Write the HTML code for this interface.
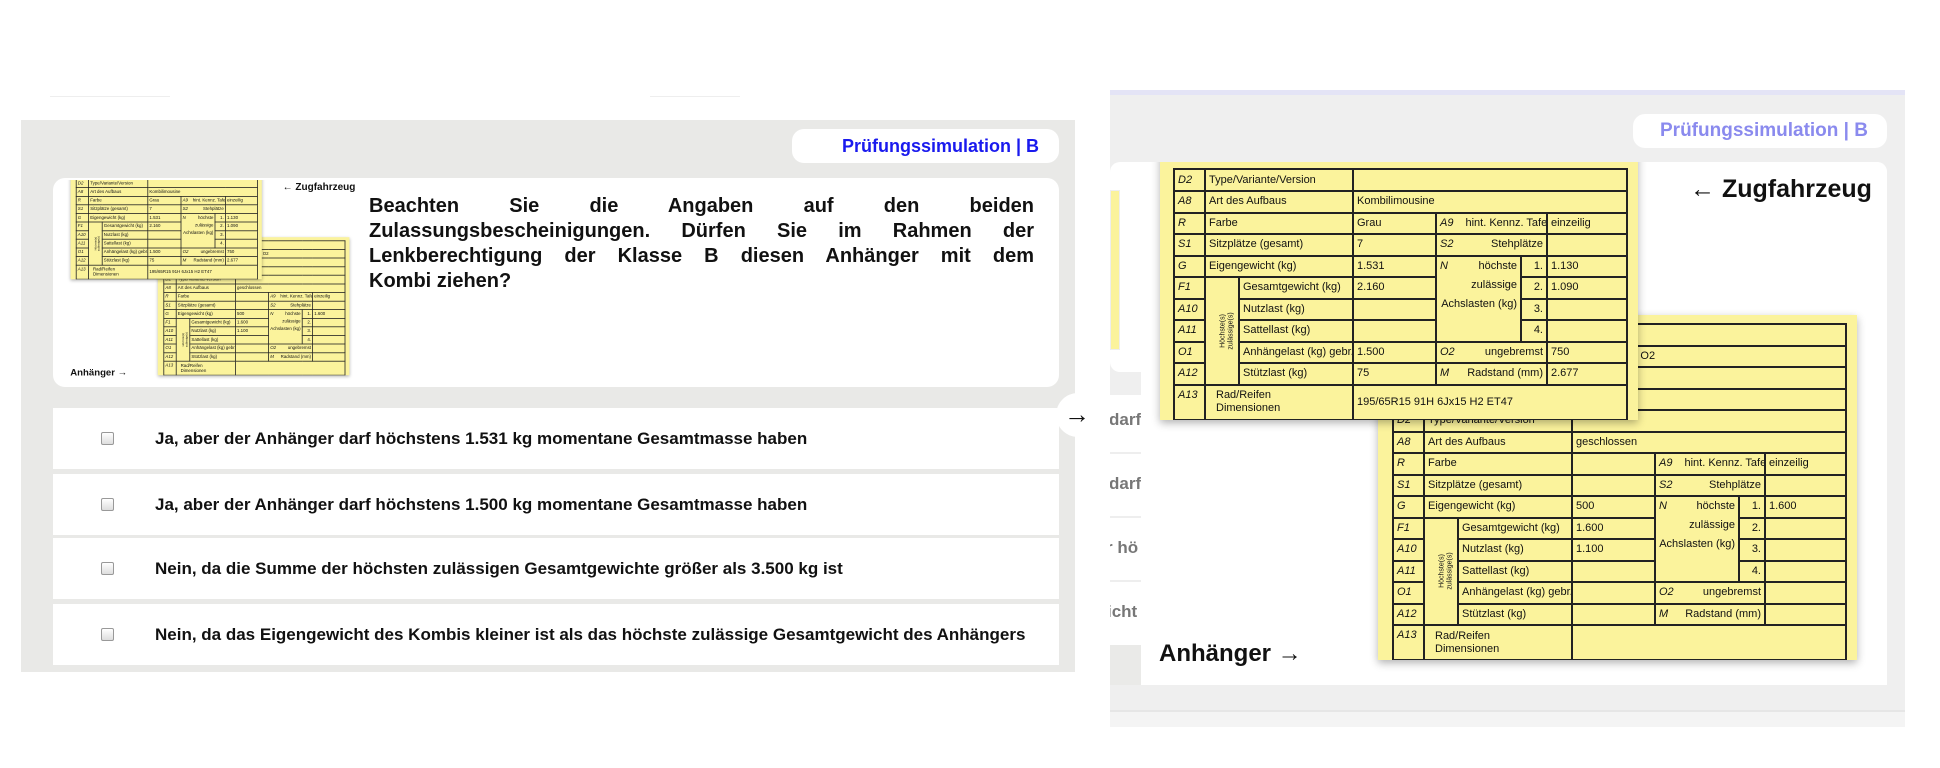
<!DOCTYPE html>
<html><head><meta charset="utf-8"><style>
*{margin:0;padding:0;box-sizing:border-box}
body{width:1940px;height:768px;background:#fff;position:relative;overflow:hidden;font-family:"Liberation Sans",sans-serif}
.abs{position:absolute}
.lp{left:21px;top:120px;width:1054px;height:552px;background:#e9e9e7}
.pill{background:#fff;border-radius:12px}
.opt{position:absolute;left:53px;width:1006px;height:61px;background:#fff;display:flex;align-items:center;font-weight:bold;font-size:17px;color:#111;white-space:nowrap}
.opt .cb{width:13px;height:13px;border:1px solid #999;background:linear-gradient(#fff,#ddd);margin-left:48px;margin-right:41px;border-radius:2px}
.card{position:absolute;background:#fbf39c;box-shadow:0 3px 8px rgba(0,0,0,.3);overflow:hidden}
table{border-collapse:collapse;font-family:"Liberation Sans",sans-serif;font-size:11px;line-height:13px;color:#111;table-layout:fixed;position:absolute}
tr{height:21.5px}
td{border:2px solid #222;padding:0 3px;white-space:nowrap;overflow:hidden}
td i{font-style:italic;margin-right:12px}
.vt{font-size:7px;text-align:center;line-height:8px}
.vt span{display:inline-block;transform:rotate(-90deg);white-space:nowrap}
.r{text-align:right}
.nc{line-height:19px;vertical-align:top;text-align:right}
.ft{font-weight:bold;color:#111;position:absolute;white-space:nowrap}
.frag{position:absolute;left:1110px;width:31px;overflow:hidden;font-weight:bold;font-size:17px;color:#777;line-height:20px;white-space:nowrap}
</style></head><body>
<div class="abs" style="left:50px;top:96px;width:120px;height:1px;background:#eee"></div>
<div class="abs" style="left:650px;top:96px;width:90px;height:1px;background:#eee"></div>
<div class="abs lp"></div>
<div class="abs pill" style="left:792px;top:129px;width:267px;height:34px"></div>
<div class="abs" style="left:792px;top:129px;width:247px;height:34px;line-height:34px;text-align:right;color:#1a1aee;font-weight:bold;font-size:18px">Prüfungssimulation | B</div>
<div class="abs pill" style="left:53px;top:178px;width:1006px;height:209px"></div>
<div class="abs" style="left:369px;top:194px;width:665px;font-weight:bold;font-size:20px;line-height:25px;text-align:justify;text-align-last:justify;color:#111">Beachten Sie die Angaben auf den beiden Zulassungsbescheinigungen. Dürfen Sie im Rahmen der Lenkberechtigung der Klasse B diesen Anhänger mit dem</div>
<div class="abs" style="left:369px;top:269px;font-weight:bold;font-size:20px;line-height:25px;color:#111">Kombi ziehen?</div>
<div class="abs" style="left:63px;top:180px;width:300px;height:202px;overflow:hidden">
 <div id="small" style="position:absolute;left:0;top:-4px;width:746px;height:518px;transform:scale(0.4);transform-origin:0 0"></div>
</div>
<div class="opt" style="top:408px"><div class="cb"></div>Ja, aber der Anhänger darf höchstens 1.531 kg momentane Gesamtmasse haben</div>
<div class="opt" style="top:474px"><div class="cb"></div>Ja, aber der Anhänger darf höchstens 1.500 kg momentane Gesamtmasse haben</div>
<div class="opt" style="top:538px"><div class="cb"></div>Nein, da die Summe der höchsten zulässigen Gesamtgewichte größer als 3.500 kg ist</div>
<div class="opt" style="top:604px"><div class="cb"></div>Nein, da das Eigengewicht des Kombis kleiner ist als das höchste zulässige Gesamtgewicht des Anhängers</div>
<div class="abs" style="left:1056px;top:393px;width:44px;height:44px;border-radius:50%;background:#fff"></div>
<div class="abs" style="left:1064px;top:400px;font-size:26px;line-height:28px;color:#111">→</div>

<!-- right panel -->
<div class="abs" style="left:1110px;top:90px;width:795px;height:637px;background:#efefef"></div>
<div class="abs" style="left:1110px;top:90px;width:795px;height:5px;background:#e4e4f6"></div>
<div class="abs" style="left:1110px;top:710px;width:795px;height:2px;background:#e6e6e6"></div>
<div class="abs" style="left:1110px;top:712px;width:795px;height:15px;background:#f4f4f4"></div>
<div class="abs pill" style="left:1633px;top:114px;width:254px;height:34px"></div>
<div class="abs" style="left:1633px;top:114px;width:235px;height:34px;line-height:34px;text-align:right;color:#8a8aee;font-weight:bold;font-size:19px">Prüfungssimulation | B</div>
<div class="abs" style="left:1110px;top:162px;width:777px;height:210px;background:#fff;border-radius:10px"></div>
<div class="abs" style="left:1110px;top:190px;width:10px;height:160px;background:#fbf39c;border:1px solid #eee"></div>
<div class="abs" style="left:1110px;top:395px;width:777px;height:290px;background:#fff"></div>
<div class="abs" style="left:1110px;top:452px;width:31px;height:2px;background:#eee"></div>
<div class="abs" style="left:1110px;top:516px;width:31px;height:2px;background:#eee"></div>
<div class="abs" style="left:1110px;top:580px;width:31px;height:2px;background:#eee"></div>
<div class="abs" style="left:1110px;top:645px;width:31px;height:40px;background:#eaeae8"></div>
<div class="frag" style="top:410px"><span style="margin-left:-1px">darf</span></div>
<div class="frag" style="top:474px"><span style="margin-left:-1px">darf</span></div>
<div class="frag" style="top:538px"><span style="margin-left:-4px">r hö</span></div>
<div class="frag" style="top:602px"><span style="margin-left:-3px">icht</span></div>
<div class="abs" style="left:1141px;top:162px;width:746px;height:518px;background:#fff;border-radius:0 10px 0 0"></div>
<div class="abs" id="big" style="left:1141px;top:162px;width:746px;height:518px;overflow:hidden"></div>

<template id="tpl">
<div class="ft" style="left:549px;top:13px;font-size:25px">← Zugfahrzeug</div>
<div class="ft" style="left:18px;top:478px;font-size:24px">Anhänger →</div>
<div class="card" style="left:237px;top:153px;width:479px;height:345px">
<table style="left:14px;top:8px;width:453px">
<colgroup><col style="width:31px"><col style="width:34px"><col style="width:114px"><col style="width:83px"><col style="width:84px"><col style="width:26px"><col style="width:81px"></colgroup>
<tr><td colspan="7"></td></tr>
<tr><td colspan="7" style="padding-left:225px">gen O2</td></tr>
<tr><td colspan="7"></td></tr>
<tr><td colspan="7"></td></tr>
<tr><td><i>D2</i></td><td colspan="2">Type/Variante/Version</td><td colspan="4"></td></tr>
<tr><td><i>A8</i></td><td colspan="2">Art des Aufbaus</td><td colspan="4">geschlossen</td></tr>
<tr><td><i>R</i></td><td colspan="2">Farbe</td><td></td><td colspan="2"><i>A9</i>hint. Kennz. Tafel</td><td>einzeilig</td></tr>
<tr><td><i>S1</i></td><td colspan="2">Sitzplätze (gesamt)</td><td></td><td colspan="2"><i>S2</i><span style="float:right">Stehplätze</span></td><td></td></tr>
<tr><td><i>G</i></td><td colspan="2">Eigengewicht (kg)</td><td>500</td><td rowspan="4" class="nc"><i style="float:left">N</i>höchste<br>zulässige<br>Achslasten (kg)</td><td class="r">1.</td><td>1.600</td></tr>
<tr><td><i>F1</i></td><td rowspan="5" class="vt"><span>Höchste(s)<br>zulässige(s)</span></td><td>Gesamtgewicht (kg)</td><td>1.600</td><td class="r">2.</td><td></td></tr>
<tr><td><i>A10</i></td><td>Nutzlast (kg)</td><td>1.100</td><td class="r">3.</td><td></td></tr>
<tr><td><i>A11</i></td><td>Sattellast (kg)</td><td></td><td class="r">4.</td><td></td></tr>
<tr><td><i>O1</i></td><td>Anhängelast (kg) gebr.</td><td></td><td colspan="2"><i>O2</i><span style="float:right">ungebremst</span></td><td></td></tr>
<tr><td><i>A12</i></td><td>Stützlast (kg)</td><td></td><td colspan="2"><i>M</i><span style="float:right">Radstand (mm)</span></td><td></td></tr>
<tr style="height:35px"><td style="vertical-align:top;padding-top:3px"><i>A13</i></td><td colspan="2" style="padding-left:10px">Rad/Reifen<br>Dimensionen</td><td colspan="4"></td></tr>
</table></div>
<div class="card" style="left:19px;top:-10px;width:478px;height:268px">
<table style="left:13px;top:16px;width:453px">
<colgroup><col style="width:31px"><col style="width:34px"><col style="width:114px"><col style="width:83px"><col style="width:85px"><col style="width:26px"><col style="width:80px"></colgroup>
<tr style="height:22px"><td><i>D2</i></td><td colspan="2">Type/Variante/Version</td><td colspan="4"></td></tr>
<tr><td><i>A8</i></td><td colspan="2">Art des Aufbaus</td><td colspan="4">Kombilimousine</td></tr>
<tr><td><i>R</i></td><td colspan="2">Farbe</td><td>Grau</td><td colspan="2"><i>A9</i>hint. Kennz. Tafel</td><td>einzeilig</td></tr>
<tr><td><i>S1</i></td><td colspan="2">Sitzplätze (gesamt)</td><td>7</td><td colspan="2"><i>S2</i><span style="float:right">Stehplätze</span></td><td></td></tr>
<tr><td><i>G</i></td><td colspan="2">Eigengewicht (kg)</td><td>1.531</td><td rowspan="4" class="nc"><i style="float:left">N</i>höchste<br>zulässige<br>Achslasten (kg)</td><td class="r">1.</td><td>1.130</td></tr>
<tr><td><i>F1</i></td><td rowspan="5" class="vt"><span>Höchste(s)<br>zulässige(s)</span></td><td>Gesamtgewicht (kg)</td><td>2.160</td><td class="r">2.</td><td>1.090</td></tr>
<tr><td><i>A10</i></td><td>Nutzlast (kg)</td><td></td><td class="r">3.</td><td></td></tr>
<tr><td><i>A11</i></td><td>Sattellast (kg)</td><td></td><td class="r">4.</td><td></td></tr>
<tr><td><i>O1</i></td><td>Anhängelast (kg) gebr.</td><td>1.500</td><td colspan="2"><i>O2</i><span style="float:right">ungebremst</span></td><td>750</td></tr>
<tr><td><i>A12</i></td><td>Stützlast (kg)</td><td>75</td><td colspan="2"><i>M</i><span style="float:right">Radstand (mm)</span></td><td>2.677</td></tr>
<tr style="height:35px"><td style="vertical-align:top;padding-top:3px"><i>A13</i></td><td colspan="2" style="padding-left:10px">Rad/Reifen<br>Dimensionen</td><td colspan="4">195/65R15 91H 6Jx15 H2 ET47</td></tr>
</table></div>
</template>
<script>
var t=document.getElementById('tpl').innerHTML;
document.getElementById('big').innerHTML=t;
document.getElementById('small').innerHTML=t;
</script>
</body></html>
